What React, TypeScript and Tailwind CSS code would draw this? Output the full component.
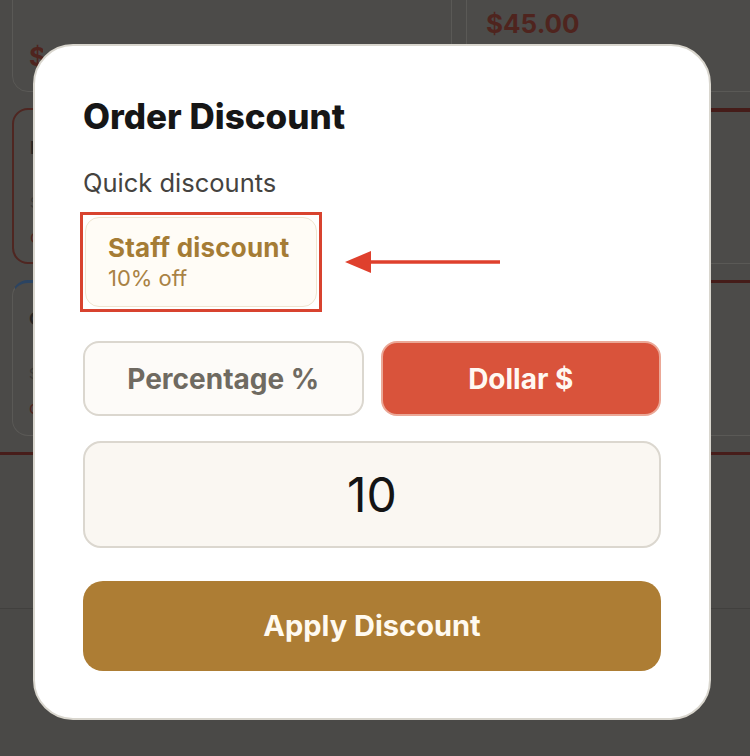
import React from "react";

function BgCard({
  className,
  children,
}: {
  className: string;
  children?: React.ReactNode;
}) {
  return (
    <div className={`h-[156px] rounded-[16px] bg-[#4c4b49] px-4 ${className}`}>
      {children}
    </div>
  );
}

function ItemLines({ name, price, note }: { name: string; price: string; note: string }) {
  return (
    <div className="flex w-[6px] flex-col overflow-hidden whitespace-nowrap">
      <div className="text-[18px] leading-[24px] font-bold text-[#262524]">{name}</div>
      <div className="mt-[33px] text-[14px] leading-[20px] text-[#3a3937]">{price}</div>
      <div className="mt-[12px] text-[17px] leading-[24px] text-[#4f251f]">{note}</div>
    </div>
  );
}

export default function App() {
  return (
    <div className="relative w-[750px] h-[756px] overflow-hidden bg-[#4b4a48] font-['Inter','Noto_Sans',sans-serif]">
      {/* dimmed page behind the dialog */}
      <div className="flex flex-col">
        <div className="mt-[-64px] grid grid-cols-[440px_440px] gap-x-[14px] gap-y-[16px] px-3">
          <BgCard className="border border-[#5a5956] pt-[104px]">
            <div className="w-[14px] overflow-hidden whitespace-nowrap text-[26px] leading-[32px] font-bold text-[#4f241e]">$12.00</div>
          </BgCard>
          <BgCard className="border border-[#5a5956] pt-[71px]">
            <div className="pl-[3px] text-[26px] leading-[32px] font-bold text-[#4f241e]">$45.00</div>
          </BgCard>
          <BgCard className="border-2 border-[#4f2621] pt-[26px]">
            <ItemLines name="Iced" price="$5.50" note="comp" />
          </BgCard>
          <BgCard className="border border-[#5a5956] border-t-4 border-t-[#451c19]" />
          <BgCard className="border border-[#5a5956] border-t-[3px] border-t-[#2b4462] pt-[24px]">
            <ItemLines name="Chai" price="$4.75" note="comp" />
          </BgCard>
          <BgCard className="border border-[#5a5956] border-t-[3px] border-t-[#451c19]" />
        </div>
        <div className="mt-[16px] h-[3px] bg-[#471d1a]" />
        <div className="h-[153px]" />
        <div className="h-[160px] border-t border-[#41403e] bg-[#4a4947]" />
      </div>

      {/* dialog */}
      <div className="absolute inset-0 flex items-start pl-[33px] pt-[44px]">
        <div className="w-[678px] rounded-[40px] border-2 border-[#d9d6ce] bg-white px-[48px] pt-[50px] pb-[47px]">
          <h2 className="text-[35px] leading-[40px] font-extrabold text-[#161616]">
            Order Discount
          </h2>
          <div className="mt-[31px] text-[25.5px] leading-[32px] text-[#45433f]">Quick discounts</div>

          <div className="mt-[13px] flex items-center">
            <div className="-ml-[3px] border-[3px] border-[#d8432f] p-[2px]">
              <div className="flex h-[90px] w-[232px] flex-col rounded-[14px] border border-[#efe5d0] bg-[#fffcf6] pl-[22px] pt-[13px]">
                <div className="text-[26px] leading-[34px] font-bold tracking-[0.2px] text-[#a57c35]">Staff discount</div>
                <div className="text-[22px] leading-[26px] text-[#a98244]">10% off</div>
              </div>
            </div>
            <svg className="ml-[23px]" width="155" height="24" viewBox="0 0 155 24">
              <line x1="22" y1="12" x2="155" y2="12" stroke="#df402d" strokeWidth="3.5" />
              <polygon points="0,12 26,1 26,23" fill="#df402d" />
            </svg>
          </div>

          <div className="mt-[29px] grid grid-cols-2 gap-[17px]">
            <button className="flex h-[75px] items-center justify-center rounded-[16px] border-2 border-[#dbd7cf] bg-[#fdfbf8] text-[28px] font-bold text-[#6f6a61]">
              Percentage %
            </button>
            <button className="flex h-[75px] items-center justify-center rounded-[16px] border-2 border-[#eba897] bg-[#d9533b] text-[28px] font-bold text-[#fff8f2]">
              Dollar $
            </button>
          </div>

          <div className="mt-[25px] flex h-[107px] items-center justify-center rounded-[18px] border-2 border-[#dbd7cf] bg-[#faf7f2] text-[48px] text-[#141414]">
            10
          </div>

          <button className="mt-[33px] flex h-[90px] w-full items-center justify-center rounded-[20px] bg-[#ad7d34] text-[29px] font-bold text-[#fffaf0]">
            Apply Discount
          </button>
        </div>
      </div>
    </div>
  );
}
